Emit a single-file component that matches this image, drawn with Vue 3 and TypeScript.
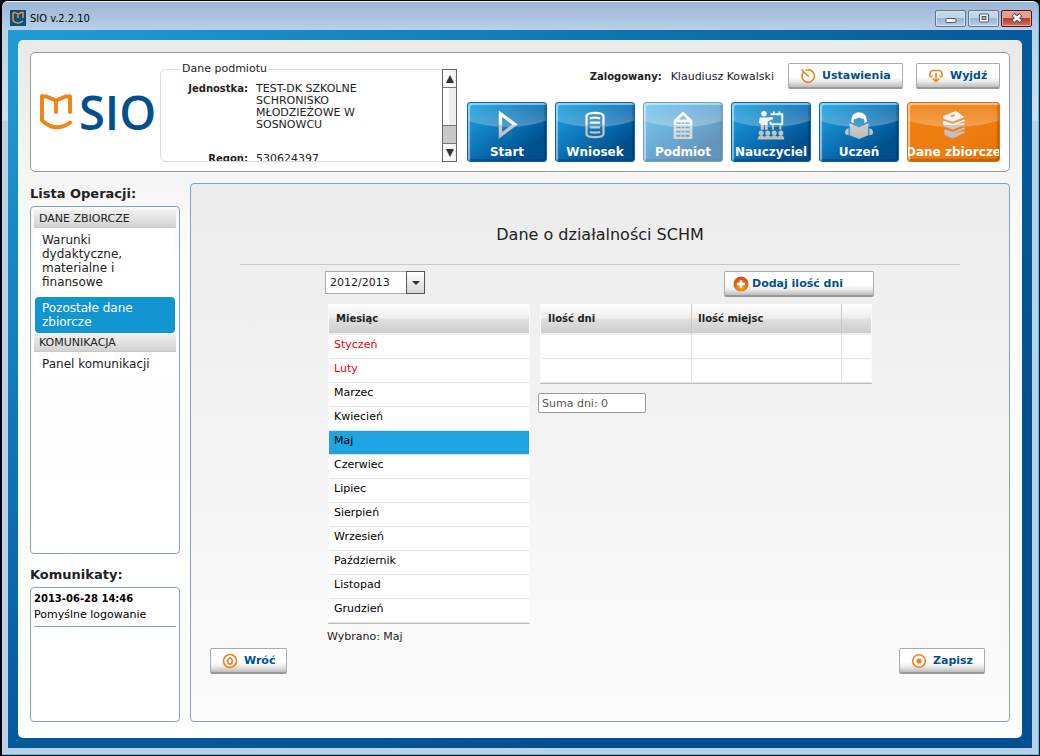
<script setup lang="ts">
import { ref, computed } from 'vue'

interface NavItem { id: string; label: string; disabled?: boolean }

const navItems: NavItem[] = [
  { id: 'start', label: 'Start' },
  { id: 'wniosek', label: 'Wniosek' },
  { id: 'podmiot', label: 'Podmiot', disabled: true },
  { id: 'nauczyciel', label: 'Nauczyciel' },
  { id: 'uczen', label: 'Uczeń' },
  { id: 'dane', label: 'Dane zbiorcze' }
]
const activeNav = ref('dane')

const sections = [
  { title: 'DANE ZBIORCZE', items: ['Warunki dydaktyczne, materialne i finansowe', 'Pozostałe dane zbiorcze'] },
  { title: 'KOMUNIKACJA', items: ['Panel komunikacji'] }
]
const activeOperation = ref('Pozostałe dane zbiorcze')

const months = ['Styczeń', 'Luty', 'Marzec', 'Kwiecień', 'Maj', 'Czerwiec', 'Lipiec', 'Sierpień', 'Wrzesień', 'Październik', 'Listopad', 'Grudzień']
const missing = ['Styczeń', 'Luty']
const selected = ref('Maj')
const year = ref('2012/2013')

const days = ref<number[]>([])
const sumText = computed(() => 'Suma dni: ' + days.value.reduce((a, b) => a + b, 0))
</script>

<template>
  <div class="window">
    <header class="titlebar">
      <svg class="app-icon" viewBox="0 0 16 16" aria-hidden="true">
        <rect width="16" height="16" fill="#00508f" />
        <path d="M3 2.500V10.800Q8 15.200 13 10.800M3 2.500H5L8 4.200 11 2.500H13V8M8 4.200V8" fill="none" stroke="#f08a1d" stroke-width="1.600" />
      </svg>
      <span class="window-title">SIO v.2.2.10</span>
      <div class="window-controls">
        <button type="button" aria-label="Minimalizuj">
          <svg viewBox="0 0 12 10"><rect x="1" y="5.500" width="10" height="4" rx="1" fill="#fff" stroke="#4c566b" /></svg>
        </button>
        <button type="button" aria-label="Maksymalizuj">
          <svg viewBox="0 0 12 10"><rect x="1.500" y="1" width="9" height="8" rx="1" fill="#fff" stroke="#4c566b" /><rect x="4" y="3.500" width="4" height="3" fill="#9db9d8" stroke="#4c566b" /></svg>
        </button>
        <button type="button" class="close" aria-label="Zamknij">
          <svg viewBox="0 0 12 10"><path d="M2 1.500 10 8.500M10 1.500 2 8.500" stroke="#4c4658" stroke-width="4.500" /><path d="M2.500 2 9.500 8M9.500 2 2.500 8" stroke="#fff" stroke-width="2.600" /></svg>
        </button>
      </div>
    </header>

    <div class="backdrop">
      <div class="page">
        <div class="top card">
          <div class="logo">
            <svg viewBox="0 0 32 36" aria-hidden="true">
              <path d="M2 2V26.500Q16 39 30 28.500M2 2.500H6.500L16 6.500 25.500 2.500H30V18M16 6.500V18" fill="none" stroke="#f08414" stroke-width="4" stroke-linejoin="round" stroke-linecap="round" />
            </svg>
            <span>SIO</span>
          </div>

          <div class="subject">
            <fieldset>
              <legend>Dane podmiotu</legend>
              <dl>
                <dt>Jednostka:</dt><dd>TEST-DK SZKOLNE SCHRONISKO MŁODZIEŻOWE W SOSNOWCU</dd>
                <dt>Regon:</dt><dd>530624397</dd>
              </dl>
            </fieldset>
            <div class="scrollbar">
              <button type="button" aria-label="Przewiń w górę"><svg viewBox="0 0 8 8"><path d="M4 0 8 8H0Z" /></svg></button>
              <div class="thumb"></div>
              <div class="track"></div>
              <button type="button" aria-label="Przewiń w dół"><svg viewBox="0 0 8 8"><path d="M4 8 8 0H0Z" /></svg></button>
            </div>
          </div>

          <div class="top-right">
            <div class="account">
              <b>Zalogowany:</b>
              <span class="user">Klaudiusz Kowalski</span>
              <button type="button" class="btn settings">
                <svg viewBox="0 0 16 16"><path d="M3.300 4.300A6.200 6.200 0 1 0 8 1.900Q6.500 1.900 5.500 2.300M1.500 1.500 8.800 8.800" /></svg>
                Ustawienia
              </button>
              <button type="button" class="btn exit">
                <svg viewBox="0 0 16 16"><path d="M4.500 8.500H3Q1.500 8.500 1.800 6.500L2.300 4.500Q3 2.500 5.500 2.500H10.500Q13 2.500 13.700 4.500L14.200 6.500Q14.500 8.500 13 8.500H11.500M8 5V13.500M4.800 10.500 8 13.700 11.200 10.500" /></svg>
                Wyjdź
              </button>
            </div>
            <nav>
              <button
                v-for="n in navItems"
                :key="n.id"
                type="button"
                :disabled="n.disabled"
                :class="['tile', { active: activeNav === n.id }]"
                @click="activeNav = n.id"
              >
                <svg viewBox="0 0 32 32" aria-hidden="true">
                  <defs>
                    <linearGradient :id="'metal-' + n.id" gradientUnits="userSpaceOnUse" x1="0" y1="2" x2="0" y2="30">
                      <stop offset="0" stop-color="#fff" /><stop offset=".48" stop-color="#f2f2f2" /><stop offset=".52" stop-color="#cbcbcb" /><stop offset="1" stop-color="#bdbdbd" />
                    </linearGradient>
                  </defs>
                  <g :fill="`url(#metal-${n.id})`" :stroke="`url(#metal-${n.id})`" stroke-width="0">
                    <path v-if="n.id === 'start'" d="M9 4V27L24.500 15.500Z" fill="none" stroke-width="3.600" />
                    <template v-else-if="n.id === 'wniosek'">
                      <path d="M7 6Q8 3 16 3T25 6V26Q24 29 16 29T7 26Z" fill="none" stroke-width="2.400" />
                      <path d="M10.500 9Q16 7.500 21.500 9M10.500 13.500H21.500M10.500 18.500H21.500M10.500 23.500Q16 25 21.500 23.500" fill="none" stroke-width="2.400" />
                    </template>
                    <path v-else-if="n.id === 'podmiot'" fill-rule="evenodd" d="M6 11 16 1.500 26 11V31H6ZM11.500 10H20.500L16 5.500ZM9 13H13.500V15H9ZM14.500 13H17.500V15H14.500ZM18.500 13H23V15H18.500ZM9 17.500H13.500V19.500H9ZM14.500 17.500H17.500V19.500H14.500ZM18.500 17.500H23V19.500H18.500ZM9 22H13.500V24H9ZM14.500 22H17.500V24H14.500ZM18.500 22H23V24H18.500ZM9 26.500H13.500V28.500H9ZM14.500 26.500H17.500V28.500H14.500ZM18.500 26.500H23V28.500H18.500Z" />
                    <template v-else-if="n.id === 'nauczyciel'">
                      <circle cx="8.500" cy="4" r="2.900" />
                      <path d="M4 8H12L17.500 7.500 18.500 9.500 12.500 12V21H9.500V16H8.300V21H5V15L3 13.500Z" />
                      <path d="M15.500 4.500H28V15H15.500M19 1.500V4.500M25 1.500V4.500M18 15V21M26 15V21M15.500 12.500V15.500" fill="none" stroke-width="2" />
                      <circle cx="5.500" cy="24.500" r="2.700" /><circle cx="12.500" cy="24.500" r="2.700" /><circle cx="19.500" cy="24.500" r="2.700" /><circle cx="26.500" cy="24.500" r="2.700" />
                      <path d="M2 31.500V29L4.500 27H6.500L9 28.500 11.500 27H13.500L16 28.500 18.500 27H20.500L23 28.500 25.500 27H27.500L30 29V31.500Z" />
                    </template>
                    <template v-else-if="n.id === 'uczen'">
                      <path d="M16 2.500Q23 2.500 24 9.500L24.500 12.500 21.500 14Q22.500 10.500 21 9.500 18 9.500 16.500 8 14 9.500 11 9.500 9.500 10.500 10.500 14L7.500 12.500 8 9.500Q9 2.500 16 2.500Z" />
                      <path d="M6 14.500 16 18.500 26 14.500V27L16 31 6 27Z" />
                      <path d="M5 19.500V27Q1 27 1 23.500 1.500 20 5 19.500ZM27 19.500V27Q31 27 31 23.500 30.500 20 27 19.500Z" />
                    </template>
                    <template v-else>
                      <path fill-rule="evenodd" d="M5 6 17 1.500Q18.500 1 20 2.500L27 7.500 14.500 12.500 5.500 9.500Q3.500 7.500 5 6ZM11.500 6.500 16 4.500 18 5.500 13.500 7.800Z" />
                      <path d="M5 11.500 14.500 15 27 10 28 11.500 15.500 17 26.500 13.500 27.500 15.500 14.500 21 5.500 17.500Q3.500 14 5 11.500Z" />
                      <path d="M6.500 20.500 14.500 23.500 27 18.500 28 20 15.500 25.500 26.500 22 27.500 24 15 30.500 6.500 27Q4.500 23.500 6.500 20.500Z" />
                    </template>
                  </g>
                </svg>
                <span>{{ n.label }}</span>
              </button>
            </nav>
          </div>
        </div>

        <div class="columns">
          <aside>
            <h2>Lista Operacji:</h2>
            <div class="box operations">
              <template v-for="s in sections" :key="s.title">
                <h3>{{ s.title }}</h3>
                <button
                  v-for="i in s.items"
                  :key="i"
                  type="button"
                  :class="['operation', { current: i === activeOperation }]"
                  @click="activeOperation = i"
                >{{ i }}</button>
              </template>
            </div>
            <h2>Komunikaty:</h2>
            <div class="box messages">
              <article><b>2013-06-28 14:46</b><p>Pomyślne logowanie</p></article>
            </div>
          </aside>

          <main class="box">
            <h1>Dane o działalności SCHM</h1>
            <div class="workspace">
              <div class="tools">
                <div class="picker">
                  <select v-model="year" aria-label="Rok szkolny"><option>2012/2013</option></select>
                  <span class="arrow"><svg viewBox="0 0 8 4"><path d="M0 0H8L4 4Z" /></svg></span>
                </div>
                <button type="button" class="btn add">
                  <svg viewBox="0 0 16 16">
                    <defs><radialGradient id="plus" cx=".5" cy=".75" r=".7"><stop offset="0" stop-color="#f9a01b" /><stop offset="1" stop-color="#d8480c" /></radialGradient></defs>
                    <circle class="disc" cx="8" cy="8" r="7.500" /><path class="cross" d="M8 4V12M4 8H12" />
                  </svg>
                  Dodaj ilość dni
                </button>
              </div>
              <div class="left">
                <table class="months">
                  <thead><tr><th scope="col">Miesiąc</th></tr></thead>
                  <tbody>
                    <tr v-for="m in months" :key="m" :class="{ missing: missing.includes(m), selected: m === selected }" @click="selected = m">
                      <td>{{ m }}</td>
                    </tr>
                  </tbody>
                </table>
                <p class="chosen">Wybrano: {{ selected }}</p>
              </div>
              <div class="right">
                <table class="days">
                  <colgroup><col class="wide"><col class="wide"><col></colgroup>
                  <thead><tr><th scope="col">Ilość dni</th><th scope="col">Ilość miejsc</th><th></th></tr></thead>
                  <tbody><tr v-for="r in 2" :key="r"><td></td><td></td><td></td></tr></tbody>
                </table>
                <input class="sum" type="text" readonly :value="sumText" aria-label="Suma dni">
              </div>
            </div>
            <footer>
              <button type="button" class="btn back">
                <svg viewBox="0 0 16 16"><circle cx="8" cy="8" r="6.500" /><path d="M4.800 8 8 4.800 11.200 8M6 7.800V9.500Q6 11 8 11T10 9.500V7.800" /></svg>
                Wróć
              </button>
              <button type="button" class="btn save">
                <svg viewBox="0 0 16 16"><circle cx="8" cy="8" r="6.300" /><circle class="dot" cx="8" cy="8" r="2.600" /></svg>
                Zapisz
              </button>
            </footer>
          </main>
        </div>
      </div>
    </div>
  </div>
</template>

<style>
html, body, #app { height: 100%; }
body { margin: 0; background: #000; }
</style>

<style scoped>
* { box-sizing: border-box; }
.window {
  min-height: 100%;
  display: flex;
  flex-direction: column;
  padding: 0 7px 7px 6px;
  border: solid #000;
  border-width: 1px 1px 1px 2px;
  border-radius: 7px 7px 0 0;
  background: linear-gradient(#9ab4d3, #b9d1ea 30px, #cfe0f3 119px, #b9d1ea 120px);
  box-shadow: inset -1px -1px #2ed3ee, inset 0 1px #e8f1fa;
  font-family: "DejaVu Sans", Verdana, sans-serif;
  font-size: 11px;
  color: #222;
}
button, input, select { font: inherit; color: inherit; margin: 0; }
h1, h2, h3, p, dl, dd { margin: 0; }

.titlebar { height: 29px; flex: none; display: flex; align-items: center; padding: 5px 0 0 2px; color: #000; }
.app-icon { width: 16px; height: 16px; margin-bottom: 1px; }
.window-title { margin-left: 4px; flex: 1; font-family: "DejaVu Sans Condensed", Tahoma, sans-serif; }
.window-controls { display: flex; gap: 2px; align-items: center; }
.window-controls button {
  width: 31px; height: 17px; padding: 0;
  border: 1px solid #5d7593; border-radius: 2px;
  background: linear-gradient(#c3d5e9 45%, #9bb5d2 50%, #b8d0e8);
  box-shadow: inset 0 0 0 1px #d4e3f3;
  display: flex; align-items: center; justify-content: center;
}
.window-controls svg { width: 12px; height: 10px; }
.window-controls .close { border-color: #4e1419; background: linear-gradient(#e0a195 45%, #bd3b27 50%, #d4705b); box-shadow: inset 0 0 0 1px #e7aaa0; }

.backdrop { flex: 1; display: flex; padding: 10px; background: radial-gradient(ellipse at 0 0, #229cd5 0, #005091 80%); }
.page { flex: 1; display: flex; flex-direction: column; gap: 11px; min-width: 0; padding: 12px 12px 16px; border-radius: 5px; background: linear-gradient(#e9e9e9, #fdfdfd 220px, #fff); }

.card { border: 1px solid #999; border-radius: 5px; background: #fff; }
.top { height: 120px; display: flex; padding: 9px; }
.logo { width: 120px; flex: none; display: flex; align-items: center; gap: 7px; color: #00508f; font: 600 47px/48px "Open Sans", sans-serif; }
.logo svg { width: 32px; height: 36px; flex: none; }

.subject { width: 297px; height: 100px; flex: none; display: flex; }
fieldset { flex: 1; min-width: 0; height: 100%; margin: 0; padding: 0 0 0 22px; border: 1px solid #ddd; border-radius: 6px; overflow: hidden; }
legend { padding: 0 2px; line-height: 14px; margin-left: -3px; }
dl { display: grid; grid-template-columns: 65px 120px; column-gap: 8px; row-gap: 22px; padding-top: 7px; line-height: 12px; height: 85px; overflow: hidden; }
dt { font-weight: bold; font-size: 10px; text-align: right; }
.scrollbar { width: 15px; margin: 7px 0 0 -15px; flex: none; display: flex; flex-direction: column; border: 1px solid #666; background: #fff; position: relative; }
.scrollbar button { height: 17px; padding: 0; border: 0; background: linear-gradient(90deg, #fff, #eee); display: flex; align-items: center; justify-content: center; }
.scrollbar svg { width: 8px; height: 8px; fill: #333; }
.thumb { flex: 1; border: solid #777; border-width: 1px 0; background: linear-gradient(90deg, #fff 40%, #eee 50%); }
.track { height: 18px; background: #c8c8c8; border-bottom: 1px solid #777; }

.top-right { flex: 1; min-width: 0; display: flex; flex-direction: column; align-items: flex-end; justify-content: space-between; }
.account { display: flex; align-items: center; margin-top: 1px; }
.account b { font-size: 10px; }
.user { margin: 0 14px 0 9px; }
.btn {
  height: 26px; padding: 0 8px; display: inline-flex; align-items: center; white-space: nowrap;
  border: 1px solid #aaa; border-bottom: 2px solid #999; border-radius: 2px;
  background: linear-gradient(#fff 55%, #ededed 75%, #bdbdbd);
  color: #00508f; font-weight: bold;
}
.btn svg { width: 16px; height: 16px; margin-right: 6px; flex: none; fill: none; stroke: #ef8218; stroke-width: 1.6; }
.btn .dot { fill: #ef8218; stroke: none; }
.settings { width: 115px; padding-left: 11px; }
.exit { width: 84px; padding-left: 11px; margin-left: 13px; }
nav { display: flex; gap: 8px; }
.tile {
  position: relative; flex: none; min-width: 80px; height: 60px; padding: 0 0 2px;
  display: flex; flex-direction: column; align-items: center; justify-content: space-between;
  border: 1px solid #0a67a7; border-radius: 3px; overflow: hidden;
  background: linear-gradient(145deg, #1fa5e1, #0c76ba 45%, #00508f 78%);
  box-shadow: inset 2px 2px 1px rgba(255, 255, 255, .5), inset -2px -2px 1px rgba(0, 40, 90, .35);
  color: #fff; font-size: 12px; font-weight: bold; line-height: 14px; white-space: nowrap;
}
.tile::before { content: ""; position: absolute; left: -30%; right: -30%; top: -60%; height: 102%; border-radius: 50%; background: linear-gradient(rgba(255, 255, 255, 0) 50%, rgba(255, 255, 255, .28)); }
.tile svg { position: relative; width: 30px; height: 30px; margin-top: 7px; }
.tile span { position: relative; }
.tile.active { width: 93px; border-color: #d9720d; background: linear-gradient(145deg, #f08010, #ee7c10 60%, #e87408); box-shadow: inset 2px 2px 1px rgba(255, 255, 255, .5), inset -2px -2px 1px rgba(120, 50, 0, .35); }
.tile:disabled { opacity: .6; }

.columns { flex: 1; display: grid; grid-template-columns: 150px minmax(0, 1fr); gap: 10px; }
aside { display: flex; flex-direction: column; }
h2 { font-size: 13px; line-height: 16px; padding: 3px 0 4px; }
.box { border: 1px solid #7ba5cb; border-radius: 4px; }
.operations { flex: 1; padding: 3px; margin-bottom: 10px; }
h3 { height: 18px; padding-left: 5px; font-size: 11px; font-weight: normal; line-height: 18px; background: linear-gradient(#f1f1f1, #d0d0d0); box-shadow: inset 0 -1px #c8c8c8; }
.operation { display: block; width: calc(100% - 2px); margin: 1px 1px 0; padding: 4px 7px; border: 0; border-radius: 4px; background: #fff; font-size: 12px; line-height: 14px; text-align: left; }
.operation.current { margin: 4px 1px 1px; background: #1296d2; color: #fff; }
.messages { height: 135px; padding: 3px; background: #fff; color: #000; }
article { padding: 0 0 3px; line-height: 16px; border-bottom: 1px solid #7ba5cb; }
article b { font-size: 10px; display: block; }

main { min-width: 0; display: flex; flex-direction: column; padding: 0 19px 47px; background: linear-gradient(#ececec, #fcfcfc); }
h1 { margin: 0 30px 6px; padding: 41px 0 19px; border-bottom: 1px solid #c8c8c8; font-size: 16px; font-weight: normal; line-height: 20px; text-align: center; }
.workspace { width: 550px; margin: 0 auto; display: grid; grid-template-columns: 205px 336px; column-gap: 8px; }
.tools { grid-column: 1 / -1; display: flex; justify-content: space-between; height: 33px; }
.picker { position: relative; width: 100px; height: 23px; }
select { width: 100%; height: 100%; padding: 0 4px; border: 1px solid #aaa; border-radius: 0; background: #fff; appearance: none; }
.arrow { position: absolute; top: 0; right: 0; width: 19px; height: 23px; border: 1px solid #555; background: linear-gradient(#fff, #d6d6d6); pointer-events: none; display: flex; align-items: center; justify-content: center; }
.arrow svg { width: 8px; height: 4px; fill: #333; }
.add { width: 150px; }
.add svg { margin-right: 3px; }
.add .disc { fill: url(#plus); stroke: none; }
.add .cross { stroke: #fff; stroke-width: 2.6; }

table { border-collapse: separate; border-spacing: 0; table-layout: fixed; border: solid #f9f9f9; border-width: 0 1px; background: #fff; box-shadow: 0 1px #c0c0c0; }
th { height: 31px; padding: 0 7px; border-bottom: 2px solid #eee; text-align: left; font-size: 10px; background: linear-gradient(#fefefe, #eee 48%, #e0e0e0 52%, #cdcdcd); }
td { height: 24px; padding: 0 5px 3px; line-height: 16px; border-bottom: 1px solid #e2e2e2; color: #000; cursor: default; }
.months { width: 202px; margin-left: 3px; }
.missing td { color: #f00000; }
.selected td { background: #1ea4e1; }
.days { width: 332px; margin-left: 2px; }
.days .wide { width: 150px; }
.days th + th { border-left: 1px solid #c8c8c8; padding-left: 6px; }
.days td + td { border-left: 1px solid #e2e2e2; }
.chosen { margin: 7px 0 0 2px; line-height: 14px; }
.sum { display: block; width: 108px; height: 20px; margin-top: 10px; padding: 0 3px; border: 1px solid #999; border-radius: 2px; background: #fff; color: #555; }
footer { display: flex; justify-content: space-between; margin-top: auto; padding-right: 5px; }
.back { width: 77px; padding-left: 11px; }
.save { width: 86px; padding-left: 11px; }
</style>
